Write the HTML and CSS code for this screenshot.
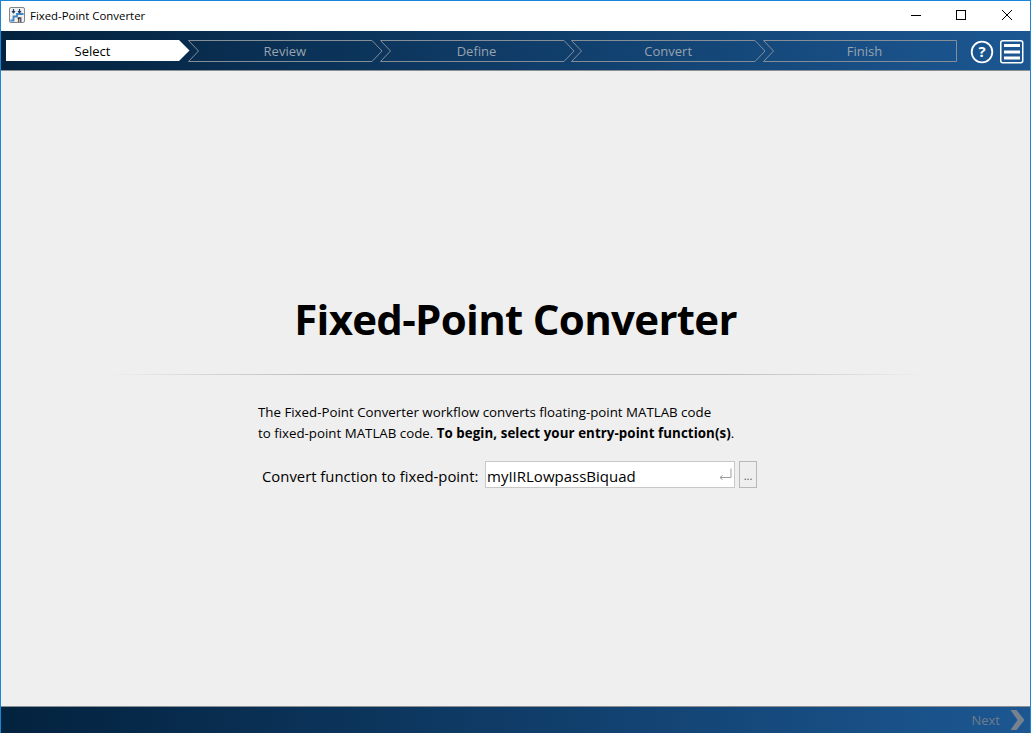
FILE: index.html
```html
<!DOCTYPE html>
<html lang="en">
<head>
<meta charset="utf-8">
<title>Fixed-Point Converter</title>
<link rel="stylesheet" href="styles.css">
</head>
<body>
<div class="window">
  <div class="titlebar">
    <svg class="appicon" width="16" height="16" viewBox="0 0 16 16">
      <rect x="0.5" y="0.5" width="15" height="15" rx="1.500" fill="#f0f0f0" stroke="#858585"/>
      <path d="M1.500 13.500H4.500V9.500H8V7H14.500" fill="none" stroke="#3f86c6" stroke-width="1.800"/>
      <path d="M4.500 2V5.500M3 4.200L4.500 5.800L6 4.200M10.500 2V5.500M9 4.200L10.500 5.800L12 4.200" fill="none" stroke="#1d3f66" stroke-width="1.200"/>
      <text x="8.500" y="14.500" class="appicon-text">fi</text>
    </svg>
    <span class="title">Fixed-Point Converter</span>
    <div class="winctrls">
      <svg class="winbtn" width="12" height="12" viewBox="0 0 12 12"><path d="M2 6.500H12" stroke="#000" fill="none"/></svg>
      <svg class="winbtn" width="12" height="12" viewBox="0 0 12 12"><rect x="1.5" y="1.5" width="9" height="9" stroke="#000" fill="none"/></svg>
      <svg class="winbtn" width="12" height="12" viewBox="0 0 12 12"><path d="M1 1L11 11M11 1L1 11" stroke="#000" fill="none"/></svg>
    </div>
  </div>

  <div class="header">
    <div class="steps">
      <div class="step step-active">
        <svg class="step-shape" width="184" height="21" viewBox="0 0 184 21"><path d="M0 0H173L183.500 10.500L173 21H0Z" fill="#fff"/></svg>
        <span class="step-label">Select</span>
      </div>
      <div class="step">
        <svg class="step-shape" width="195" height="22" viewBox="0 0 195 22"><path d="M0.500 0.500H184L194 11L184 21.500H0.500L10.500 11Z" class="step-line"/></svg>
        <span class="step-label">Review</span>
      </div>
      <div class="step">
        <svg class="step-shape" width="195" height="22" viewBox="0 0 195 22"><path d="M0.500 0.500H184L194 11L184 21.500H0.500L10.500 11Z" class="step-line"/></svg>
        <span class="step-label">Define</span>
      </div>
      <div class="step">
        <svg class="step-shape" width="195" height="22" viewBox="0 0 195 22"><path d="M0.500 0.500H184L194 11L184 21.500H0.500L10.500 11Z" class="step-line"/></svg>
        <span class="step-label">Convert</span>
      </div>
      <div class="step step-last">
        <svg class="step-shape" width="194" height="22" viewBox="0 0 194 22"><path d="M0.500 0.500H193.500V21.500H0.500L10.500 11Z" class="step-line"/></svg>
        <span class="step-label">Finish</span>
      </div>
    </div>
    <svg class="help" width="24" height="24" viewBox="0 0 24 24">
      <circle cx="12" cy="12" r="10.300" fill="none" stroke="#fff" stroke-width="1.800"/>
      <text x="12" y="17" class="help-text">?</text>
    </svg>
    <svg class="menu" width="24" height="24" viewBox="0 0 24 24">
      <rect x="0.750" y="0.750" width="22" height="22" rx="2" fill="none" stroke="#fff" stroke-width="1.500"/>
      <path d="M4 5.500H20M4 12H20M4 18H20" stroke="#fff" stroke-width="3" fill="none"/>
    </svg>
  </div>

  <main class="content">
    <h1 class="heading">Fixed-Point Converter</h1>
    <div class="divider"></div>
    <p class="intro">The Fixed-Point Converter workflow converts floating-point MATLAB code<br>to fixed-point MATLAB code. <b class="intro-strong">To begin, select your entry-point function(s)</b>.</p>
    <div class="entry">
      <span class="entry-label">Convert function to fixed-point:</span>
      <div class="entry-field">
        <span class="entry-value">myIIRLowpassBiquad</span>
        <svg class="enter-icon" width="14" height="14" viewBox="0 0 14 14"><path d="M13 0.500V9.500H2M4.500 7.500L2 9.500L4.500 11.500" fill="none" stroke="#9c9c9c"/></svg>
      </div>
      <div class="browse">...</div>
    </div>
  </main>

  <div class="footer">
    <span class="next">Next</span>
    <svg class="next-icon" width="15" height="20" viewBox="0 0 15 20"><path d="M0.500 0H6.500L14.500 10L6.500 20H0.500L7.500 10Z" fill="#77828f"/></svg>
  </div>
</div>
</body>
</html>
```
FILE: styles.css
```css
* { box-sizing: border-box; }
html, body { margin: 0; padding: 0; height: 100%; }
body { font-family: "Open Sans", "Noto Sans", sans-serif; color: #000; overflow: hidden; }

.window {
  width: 1031px;
  height: 733px;
  display: flex;
  flex-direction: column;
  border: 1px solid #1a86d9;
  border-bottom: 0;
  background: #efefef;
}

.titlebar {
  height: 30px;
  flex: none;
  display: flex;
  align-items: center;
  background: #fff;
  padding-left: 8px;
}
.appicon { flex: none; margin-bottom: 2px; }
.appicon-text { font: bold 7px "Liberation Sans", sans-serif; fill: #111; }
.title { margin: 0 0 2px 5px; font-size: 11.400px; color: #000; }
.winctrls { margin-left: auto; display: flex; gap: 34px; padding: 0 17px 2px 0; }
.winbtn { display: block; }

.header {
  height: 40px;
  flex: none;
  display: flex;
  align-items: flex-start;
  padding: 9px 0 0 5px;
  background: linear-gradient(90deg, #03223e 0%, #1c5792 100%);
  border-bottom: 1px solid #8c8f92;
}
.steps { display: flex; width: 952px; flex: none; }
.step {
  position: relative;
  flex: none;
  width: 191.700px;
  height: 22px;
  display: flex;
  align-items: center;
  justify-content: center;
  padding-left: 2px;
}
.step-active { width: 182px; padding: 0 9px 0 0; }
.step-last { flex: 1; padding-left: 8px; }
.step-shape { position: absolute; left: 0; top: 0; }
.step-line { fill: none; stroke: #858d96; stroke-width: 1; }
.step-label { position: relative; font-size: 13px; color: #98a3ae; }
.step-active .step-label { color: #000; }

.help { flex: none; margin-left: 12px; display: block; }
.help-text { font: bold 15px "Open Sans", sans-serif; fill: #fff; text-anchor: middle; }
.menu { flex: none; margin-left: 6px; display: block; }

.content {
  flex: 1;
  display: flex;
  flex-direction: column;
  align-items: center;
  padding-top: 217px;
}
.heading {
  margin: 0;
  font-size: 42px;
  line-height: 62px;
  font-weight: 700;
  letter-spacing: -0.700px;
}
.divider {
  width: 820px;
  height: 1px;
  margin-top: 24px;
  background: linear-gradient(90deg, rgba(190,190,190,0) 0%, #bdbdbd 25%, #bdbdbd 75%, rgba(190,190,190,0) 100%);
}
.intro {
  align-self: flex-start;
  margin: 27px 0 0 257px;
  font-size: 13.300px;
  line-height: 21px;
}
.intro-strong { letter-spacing: 0.080px; }
.entry {
  align-self: flex-start;
  margin: 17px 0 0 261px;
  display: flex;
  align-items: center;
}
.entry-label { font-size: 14.850px; width: 223px; flex: none; padding-top: 2px; }
.entry-field {
  width: 250px;
  height: 27px;
  display: flex;
  align-items: center;
  justify-content: space-between;
  background: #fff;
  border: 1px solid #c8c8c8;
  padding: 0 1px;
}
.entry-value { font-size: 15px; padding-top: 2px; }
.enter-icon { margin-right: 1px; display: block; }
.browse {
  width: 18px;
  height: 27px;
  margin-left: 4px;
  border: 1px solid #b8b8b8;
  background: #eee;
  font-size: 11px;
  line-height: 28px;
  text-align: center;
  color: #555;
}

.footer {
  height: 27px;
  flex: none;
  display: flex;
  align-items: center;
  justify-content: flex-end;
  padding-right: 5px;
  background: linear-gradient(90deg, #03223e 0%, #1c5792 100%);
  border-top: 1px solid #8c8f92;
}
.next { font-size: 13px; color: #6f7c8b; margin-right: 10px; }
.next-icon { display: block; }
```
